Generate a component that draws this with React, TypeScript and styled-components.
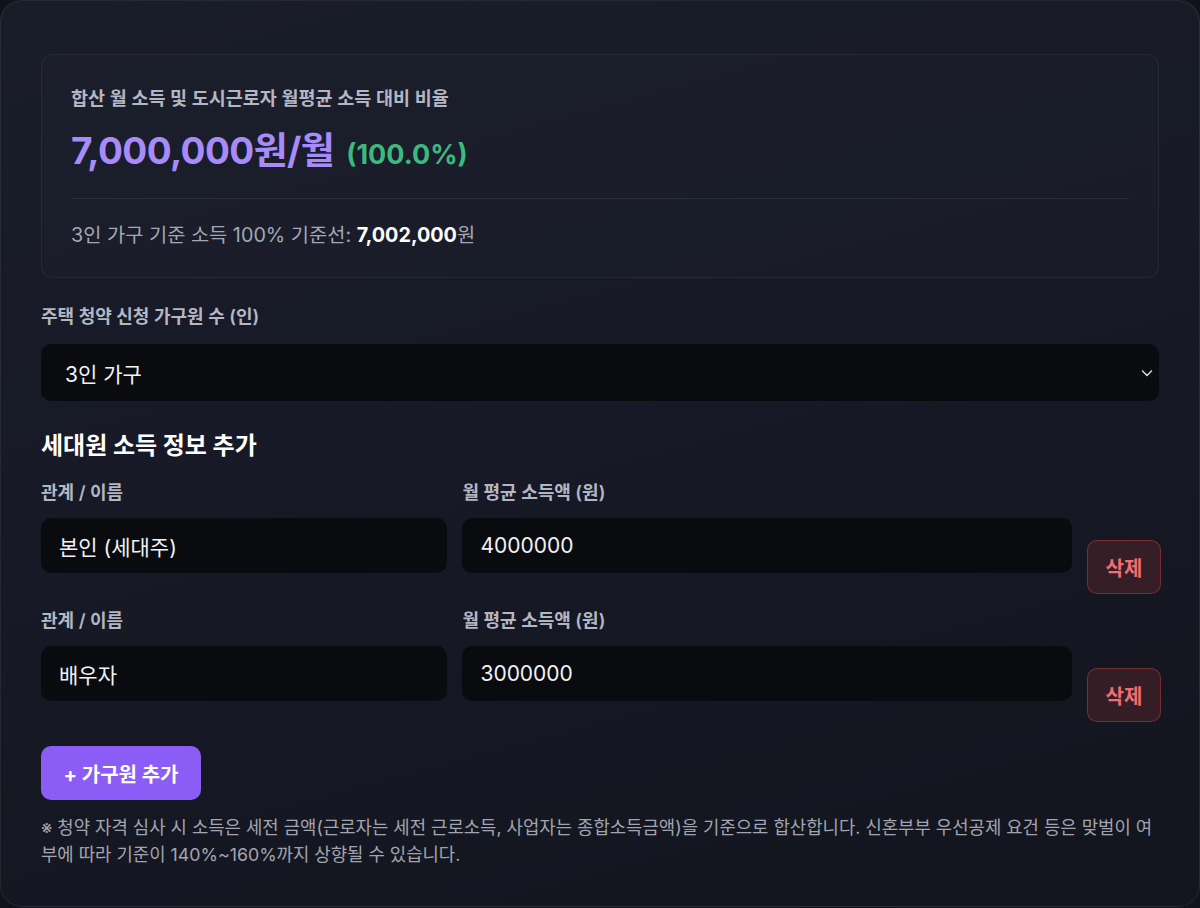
import styled, { createGlobalStyle } from "styled-components";

const GlobalStyle = createGlobalStyle`
  * { box-sizing: border-box; }
  body {
    margin: 0;
    background: #11131a;
    font-family: "Inter", "Noto Sans CJK KR", sans-serif;
    color: #e6e8ee;
  }
`;

const Card = styled.div`
  width: 1200px;
  min-height: 907px;
  padding: 53px 40px 32px;
  border: 1px solid rgba(255, 255, 255, 0.08);
  border-radius: 22px;
  background: linear-gradient(165deg, #191c29 0%, #171a26 45%, #12151d 100%);
`;

const Summary = styled.div`
  padding: 31px 29px 29px;
  border: 1px solid rgba(255, 255, 255, 0.06);
  border-radius: 12px;
  background: rgba(255, 255, 255, 0.01);
  margin-bottom: 28px;
`;

const SummaryTitle = styled.p`
  margin: 0;
  font-size: 18.5px;
  font-weight: 600;
  color: #b4b7c3;
  line-height: 24px;
`;

const Amount = styled.div`
  display: flex;
  align-items: baseline;
  gap: 12px;
  margin-top: 11px;
  padding-bottom: 23px;
  border-bottom: 1px solid rgba(255, 255, 255, 0.08);

  strong {
    font-size: 37px;
    font-weight: 700;
    color: #a78bfa;
    letter-spacing: -0.6px;
  }
  span {
    font-size: 27px;
    font-weight: 700;
    color: #3cb97f;
  }
`;

const Baseline = styled.p`
  margin: 23px 0 0;
  font-size: 19.8px;
  color: #a4a7b3;
  line-height: 26px;

  b {
    color: #ffffff;
    font-weight: 700;
  }
`;

const Label = styled.label`
  display: block;
  font-size: 18px;
  font-weight: 600;
  color: #b4b7c3;
  line-height: 22px;
  margin-bottom: 16px;
`;

const SelectBox = styled.div`
  position: relative;
  height: 57px;
  border-radius: 10px;
  background: #0a0b0f;
  display: flex;
  align-items: center;
  padding: 0 24px;
  font-size: 21px;
  color: #f1f2f5;

  svg {
    position: absolute;
    right: 5px;
    top: 50%;
    transform: translateY(-50%);
  }
`;

const Heading = styled.h3`
  margin: 30px 0 21px;
  font-size: 24px;
  font-weight: 700;
  color: #ffffff;
  line-height: 30px;
`;

const MemberRow = styled.div`
  display: flex;
  align-items: flex-end;
  gap: 15px;
  margin-bottom: 16px;
`;

const Field = styled.div<{ $grow: number }>`
  flex: ${(p) => p.$grow} 1 0;
  min-width: 0;
  padding-bottom: 21px;

  label {
    margin-bottom: 14px;
  }
`;

const TextBox = styled.div`
  height: 55px;
  border-radius: 10px;
  background: #0a0b0f;
  display: flex;
  align-items: center;
  padding: 0 18px;
  font-size: 21px;
  color: #f1f2f5;
`;

const DeleteButton = styled.button`
  width: 74px;
  height: 54px;
  flex: none;
  margin-right: -2px;
  border-radius: 10px;
  border: 1px solid rgba(239, 68, 68, 0.38);
  background: rgba(239, 68, 68, 0.15);
  color: #f26d6d;
  font-family: inherit;
  font-size: 20px;
  font-weight: 700;
`;

const AddButton = styled.button`
  margin-top: 8px;
  width: 160px;
  height: 54px;
  border: none;
  border-radius: 10px;
  background: #8b5cf6;
  color: #ffffff;
  font-family: inherit;
  font-size: 20px;
  font-weight: 700;
`;

const Note = styled.p`
  margin: 14px 0 0;
  font-size: 17.8px;
  line-height: 27px;
  color: #a2a5b0;
`;

const members = [
  { name: "본인 (세대주)", income: "4000000" },
  { name: "배우자", income: "3000000" },
];

export default function App() {
  return (
    <>
      <GlobalStyle />
      <Card>
        <Summary>
          <SummaryTitle>합산 월 소득 및 도시근로자 월평균 소득 대비 비율</SummaryTitle>
          <Amount>
            <strong>7,000,000원/월</strong>
            <span>(100.0%)</span>
          </Amount>
          <Baseline>
            3인 가구 기준 소득 100% 기준선: <b>7,002,000</b>원
          </Baseline>
        </Summary>

        <Label>주택 청약 신청 가구원 수 (인)</Label>
        <SelectBox>
          3인 가구
          <svg width="14" height="14" viewBox="0 0 14 14" fill="none">
            <path d="M2.5 5L7 9.5L11.5 5" stroke="#d8dae0" strokeWidth="1.5" strokeLinecap="round" strokeLinejoin="round" />
          </svg>
        </SelectBox>

        <Heading>세대원 소득 정보 추가</Heading>

        {members.map((m) => (
          <MemberRow key={m.name}>
            <Field $grow={2}>
              <Label>관계 / 이름</Label>
              <TextBox>{m.name}</TextBox>
            </Field>
            <Field $grow={3}>
              <Label>월 평균 소득액 (원)</Label>
              <TextBox>{m.income}</TextBox>
            </Field>
            <DeleteButton>삭제</DeleteButton>
          </MemberRow>
        ))}

        <AddButton>+ 가구원 추가</AddButton>
        <Note>
          ※ 청약 자격 심사 시 소득은 세전 금액(근로자는 세전 근로소득, 사업자는 종합소득금액)을 기준으로 합산합니다. 신혼부부 우선공제 요건 등은 맞벌이 여부에 따라 기준이 140%~160%까지 상향될 수 있습니다.
        </Note>
      </Card>
    </>
  );
}
